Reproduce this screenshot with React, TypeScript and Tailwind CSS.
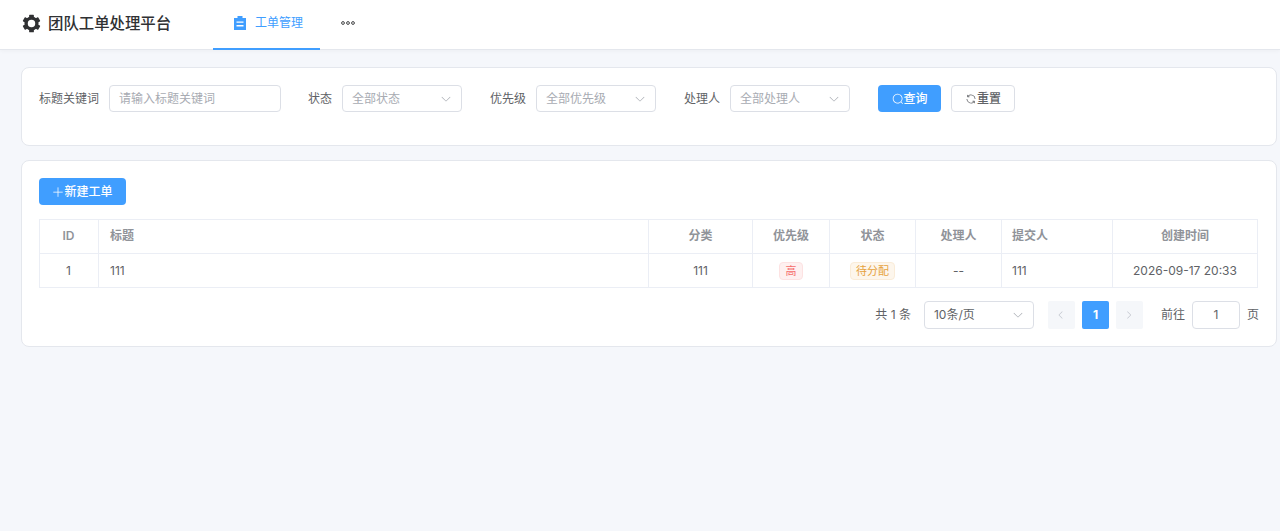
import React from "react";

const ARROW_DOWN = "M831.872 340.864 512 652.672 192.128 340.864a30.592 30.592 0 0 0-42.752 0 29.12 29.12 0 0 0 0 41.6L489.664 714.24a32 32 0 0 0 44.672 0l340.288-331.712a29.12 29.12 0 0 0 0-41.728 30.592 30.592 0 0 0-42.752 0z";
const SEARCH = "m795.904 750.72 124.992 124.928a32 32 0 0 1-45.248 45.248L750.656 795.904a416 416 0 1 1 45.248-45.248zM480 832a352 352 0 1 0 0-704 352 352 0 0 0 0 704";
const REFRESH = "M771.776 794.88A384 384 0 0 1 128 512h64a320 320 0 0 0 555.712 216.448H654.72a32 32 0 1 1 0-64h149.056a32 32 0 0 1 32 32v148.928a32 32 0 1 1-64 0v-50.56zM276.288 295.616h92.992a32 32 0 0 1 0 64H220.16a32 32 0 0 1-32-32V178.56a32 32 0 0 1 64 0v50.56A384 384 0 0 1 896.128 512h-64a320 320 0 0 0-555.776-216.384z";
const PLUS = "M480 480V128a32 32 0 0 1 64 0v352h352a32 32 0 0 1 0 64H544v352a32 32 0 1 1-64 0V544H128a32 32 0 0 1 0-64z";
const LEFT = "M609.408 149.376 277.76 489.664a32 32 0 0 0 0 44.672l331.648 340.352a29.12 29.12 0 0 0 41.728 0 30.592 30.592 0 0 0 0-42.752L339.264 512l312.128-319.872a30.592 30.592 0 0 0 0-42.752 29.12 29.12 0 0 0-41.984 0z";
const RIGHT = "M340.864 149.312a30.592 30.592 0 0 0 0 42.752L652.736 512 340.864 831.872a30.592 30.592 0 0 0 0 42.752 29.12 29.12 0 0 0 41.728 0L714.24 534.336a32 32 0 0 0 0-44.672L382.592 149.376a29.12 29.12 0 0 0-41.728 0z";

function Ep({ d, className }: { d: string; className: string }) {
  return (
    <svg viewBox="0 0 1024 1024" fill="currentColor" className={className}>
      <path d={d} />
    </svg>
  );
}

function Gear() {
  return (
    <svg viewBox="0 0 24 24" className="w-[19px] h-[19px] text-[#303133]">
      <circle cx="12" cy="12" r="6.8" fill="none" stroke="currentColor" strokeWidth="4.2" />
      <g fill="currentColor">
        {[0, 60, 120, 180, 240, 300].map((a) => (
          <rect key={a} x="9" y="0.8" width="6" height="5" rx="0.8" transform={`rotate(${a} 12 12)`} />
        ))}
      </g>
    </svg>
  );
}

function Clipboard() {
  return (
    <svg viewBox="0 0 12 14" className="w-[12px] h-[14px] text-[#409eff]">
      <path
        fill="currentColor"
        fillRule="evenodd"
        d="M3.5 0h5v2H12v12H0V2h3.5zM2.5 5.4v1.4h7V5.4zM2.5 9v1.4h7V9z"
      />
    </svg>
  );
}

function Select({ text, className, dark }: { text: string; className: string; dark?: boolean }) {
  return (
    <div className={`flex items-center justify-between h-[27px] pl-[9px] pr-[9px] bg-white border border-[#dcdfe6] rounded-[4px] ${className}`}>
      <span className={`text-[12px] ${dark ? "text-[#606266]" : "text-[#a8abb2]"}`}>{text}</span>
      <Ep d={ARROW_DOWN} className="w-[12px] h-[12px] text-[#a8abb2]" />
    </div>
  );
}

function Label({ children }: { children: React.ReactNode }) {
  return <span className="text-[12px] text-[#606266] mr-[10px]">{children}</span>;
}

const th = "h-[34px] pb-[1px] border-r border-b border-[#ebeef5] text-[12px] font-semibold text-[#909399]";
const td = "h-[33px] border-r border-[#ebeef5] text-[12px] font-normal text-[#606266]";

export default function App() {
  return (
    <div
      className="min-h-[531px] bg-[#f5f7fb] flex flex-col"
      style={{ fontFamily: '"Inter", "Noto Sans CJK SC", sans-serif' }}
    >
      <header className="h-[50px] bg-white border-b border-[#e4e7ed] shadow-[0_1px_4px_rgba(0,0,0,0.04)] flex items-stretch">
        <div className="flex items-center gap-[7px] pl-[22px] pb-[2px] w-[213px]">
          <Gear />
          <span className="text-[15.4px] font-medium text-[#303133] whitespace-nowrap">团队工单处理平台</span>
        </div>
        <div className="w-[107px] h-[50px] border-b-2 border-[#409eff] flex items-center pl-[21px] gap-[9px] pb-[2px] text-[#409eff]">
          <Clipboard />
          <span className="text-[12px]">工单管理</span>
        </div>
        <div className="flex items-center pl-[21px] pb-[4px]">
          <svg viewBox="0 0 14 4" className="w-[14px] h-[4px]">
            <g fill="none" stroke="#303133" strokeWidth="0.9">
              <circle cx="2" cy="2" r="1.4" />
              <circle cx="7" cy="2" r="1.4" />
              <circle cx="12" cy="2" r="1.4" />
            </g>
          </svg>
        </div>
      </header>

      <main className="flex flex-col gap-[14px] pt-[17px] pl-[21px] pr-[3px]">
        <section className="h-[79px] bg-white border border-[#e4e7ed] rounded-[8px] pt-[17px] pl-[17px]">
          <div className="flex items-center">
            <Label>标题关键词</Label>
            <div className="flex items-center w-[172px] h-[27px] pl-[9px] border border-[#dcdfe6] rounded-[4px] text-[12px] text-[#a8abb2]">
              请输入标题关键词
            </div>
            <div className="w-[27px]" />
            <Label>状态</Label>
            <Select text="全部状态" className="w-[120px]" />
            <div className="w-[28px]" />
            <Label>优先级</Label>
            <Select text="全部优先级" className="w-[120px]" />
            <div className="w-[28px]" />
            <Label>处理人</Label>
            <Select text="全部处理人" className="w-[120px]" />
            <button className="ml-[28px] w-[63px] h-[27px] flex items-center justify-center bg-[#409eff] text-white rounded-[4px] text-[12px] font-medium">
              <Ep d={SEARCH} className="w-[12px] h-[12px]" />
              查询
            </button>
            <button className="ml-[10px] w-[64px] h-[27px] flex items-center justify-center bg-white border border-[#dcdfe6] text-[#606266] rounded-[4px] text-[12px] font-medium">
              <Ep d={REFRESH} className="w-[12px] h-[12px]" />
              重置
            </button>
          </div>
        </section>

        <section className="h-[187px] bg-white border border-[#e4e7ed] rounded-[8px] pt-[17px] pl-[17px] pr-[17px]">
          <button className="w-[87px] h-[27px] flex items-center justify-center bg-[#409eff] text-white rounded-[4px] text-[12px] font-medium">
            <Ep d={PLUS} className="w-[12px] h-[12px]" />
            新建工单
          </button>
          <table className="mt-[14px] w-[1219px] table-fixed border-separate border-spacing-0 border-t border-l border-b border-[#ebeef5]">
            <colgroup>
              <col className="w-[59px]" />
              <col className="w-[550px]" />
              <col className="w-[104px]" />
              <col className="w-[77px]" />
              <col className="w-[86px]" />
              <col className="w-[86px]" />
              <col className="w-[111px]" />
              <col className="w-[145px]" />
            </colgroup>
            <thead>
              <tr>
                <th className={`${th} text-center pr-[1px]`}>ID</th>
                <th className={`${th} text-left pl-[11px]`}>标题</th>
                <th className={`${th} text-center`}>分类</th>
                <th className={`${th} text-center`}>优先级</th>
                <th className={`${th} text-center`}>状态</th>
                <th className={`${th} text-center`}>处理人</th>
                <th className={`${th} text-left pl-[10px]`}>提交人</th>
                <th className={`${th} text-center`}>创建时间</th>
              </tr>
            </thead>
            <tbody>
              <tr>
                <td className={`${td} text-center pr-[1px]`}>1</td>
                <td className={`${td} pl-[11px]`}>111</td>
                <td className={`${td} text-center`}>111</td>
                <td className={`${td} text-center`}>
                  <span className="inline-flex items-center justify-center w-[24px] h-[18px] rounded-[4px] border border-[#fde2e2] bg-[#fef0f0] text-[#f56c6c] text-[11px] align-middle">
                    高
                  </span>
                </td>
                <td className={`${td} text-center`}>
                  <span className="inline-flex items-center justify-center w-[45px] h-[18px] rounded-[4px] border border-[#faecd8] bg-[#fdf6ec] text-[#e6a23c] text-[11px] align-middle">
                    待分配
                  </span>
                </td>
                <td className={`${td} text-center`}>--</td>
                <td className={`${td} pl-[10px]`}>111</td>
                <td className={`${td} text-center`}>2026-09-17 20:33</td>
              </tr>
            </tbody>
          </table>
          <div className="flex items-center justify-end mt-[13px] h-[28px] text-[12px] text-[#606266]">
            <span>共 1 条</span>
            <Select text="10条/页" dark className="!h-[28px] w-[110px] ml-[13px]" />
            <div className="ml-[14px] w-[27px] h-[28px] rounded-[2px] bg-[#f5f7fa] flex items-center justify-center">
              <Ep d={LEFT} className="w-[10px] h-[10px] text-[#c0c4cc]" />
            </div>
            <div className="ml-[7px] w-[27px] h-[28px] rounded-[2px] bg-[#409eff] text-white font-bold flex items-center justify-center">
              1
            </div>
            <div className="ml-[7px] w-[27px] h-[28px] rounded-[2px] bg-[#f5f7fa] flex items-center justify-center">
              <Ep d={RIGHT} className="w-[10px] h-[10px] text-[#c0c4cc]" />
            </div>
            <span className="ml-[18px]">前往</span>
            <div className="ml-[7px] w-[48px] h-[28px] border border-[#dcdfe6] rounded-[4px] flex items-center justify-center">
              1
            </div>
            <span className="ml-[7px]">页</span>
          </div>
        </section>
      </main>
    </div>
  );
}
